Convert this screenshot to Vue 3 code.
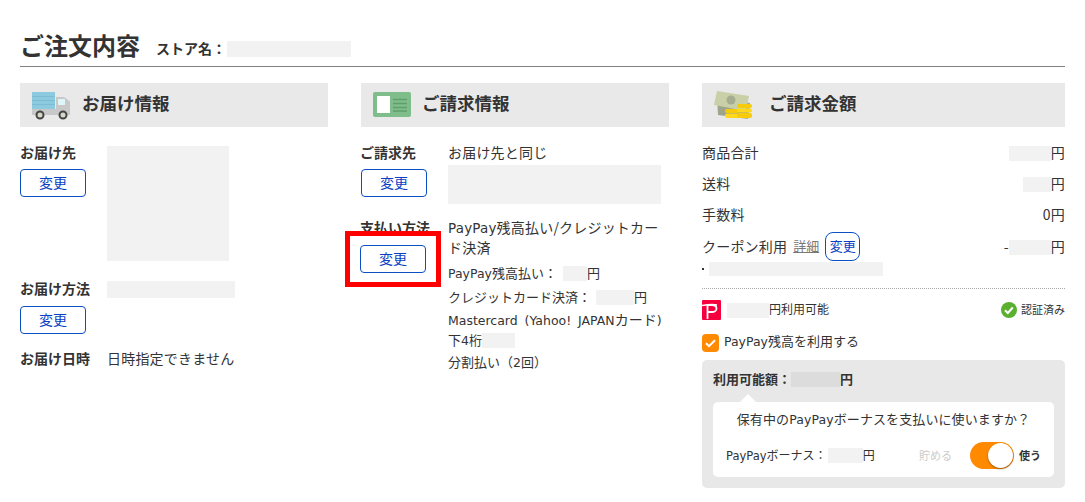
<script setup>
const totals = [
  { label: '商品合計', width: 42, value: '円' },
  { label: '送料', width: 28, value: '円' },
  { label: '手数料', width: 0, value: '0円' }
]
</script>

<template>
  <main class="page">
    <header class="title-bar">
      <h1>ご注文内容</h1>
      <span class="store">ストア名：</span>
      <i class="mask store-mask"></i>
    </header>

    <div class="columns">
      <section class="col">
        <h2 class="head head-ship">
          <svg class="ico" width="40" height="32" viewBox="0 0 40 32">
            <rect x="0" y="2" width="23" height="17" fill="#8ccbdf" />
            <path d="M0 6.500h23M0 10.500h23M0 14.500h23" stroke="#7dbcd2" stroke-width="1" />
            <path d="M0 19h24v-12h8l6 4.500v13.500h-38z" fill="#c8c8c8" />
            <rect x="26" y="9" width="7" height="6" fill="#dff6f8" />
            <circle cx="8" cy="25" r="3.500" fill="#d8d8c8" stroke="#444" stroke-width="2" />
            <circle cx="31" cy="25" r="3.500" fill="#d8d8c8" stroke="#444" stroke-width="2" />
          </svg>
          <span class="head-text">お届け情報</span>
        </h2>
        <div class="body">
          <div class="row">
            <div class="side">
              <div class="label">お届け先</div>
              <button class="change">変更</button>
            </div>
            <i class="mask addr-mask"></i>
          </div>
          <div class="row row-method">
            <div class="side">
              <div class="label">お届け方法</div>
              <button class="change">変更</button>
            </div>
            <i class="mask method-mask"></i>
          </div>
          <div class="row row-date">
            <div class="side"><div class="label">お届け日時</div></div>
            <div class="line">日時指定できません</div>
          </div>
        </div>
      </section>

      <section class="col">
        <h2 class="head head-bill">
          <svg class="ico" width="38" height="25" viewBox="0 0 38 25">
            <rect width="38" height="25" rx="2" fill="#7fbd8b" />
            <rect x="4" y="4" width="13" height="17" fill="#fff" />
            <path d="M20 7.500h14M20 11.500h14M20 15.500h14M20 19h14" stroke="#5f9f6c" stroke-width="1.500" />
          </svg>
          <span class="head-text">ご請求情報</span>
        </h2>
        <div class="body">
          <div class="row">
            <div class="side side-bill">
              <div class="label">ご請求先</div>
              <button class="change">変更</button>
            </div>
            <div class="value">
              <div class="line">お届け先と同じ</div>
              <i class="mask bill-mask"></i>
            </div>
          </div>
          <div class="row row-pay">
            <div class="side side-bill">
              <div class="label">支払い方法</div>
              <div class="highlight-wrap">
                <button class="change">変更</button>
                <span class="highlight"></span>
              </div>
            </div>
            <div class="value">
              <div class="line"><span class="la">PayPay</span>残高払い/クレジットカード決済</div>
              <div class="line small s1"><span class="la">PayPay</span>残高払い： <i class="mask m-inline m-24"></i>円</div>
              <div class="line small s2">クレジットカード決済： <i class="mask m-inline m-38"></i>円</div>
              <div class="line small s3"><span class="la">Mastercard (Yahoo! JAPAN</span><span class="kana">カード</span><span class="la">)</span><br />下<span class="la">4</span>桁<i class="mask m-inline m-33"></i></div>
              <div class="line small s4">分割払い（<span class="la">2</span>回）</div>
            </div>
          </div>
        </div>
      </section>

      <section class="col">
        <h2 class="head head-total">
          <svg class="ico" width="38" height="28" viewBox="0 0 38 28">
            <path d="M3 6l33 6-2 16-30-4z" fill="#9fa58b" />
            <path d="M3 0l32 5-3 15-32-6z" fill="#c9d0a8" />
            <circle cx="17" cy="9" r="4.500" fill="#a5ac90" />
            <g fill="#f6cb0c">
              <rect x="11" y="18" width="14" height="4" rx="2" />
              <rect x="11" y="22.500" width="14" height="4.500" rx="2" fill="#ffd91a" />
              <rect x="23" y="13" width="15" height="4" rx="2" />
              <rect x="23" y="17.500" width="15" height="4" rx="2" fill="#ffd91a" />
              <rect x="23" y="22" width="15" height="5" rx="2" />
            </g>
          </svg>
          <span class="head-text">ご請求金額</span>
        </h2>
        <div class="body">
          <div v-for="t in totals" :key="t.label" class="sum">
            <span class="txt">{{ t.label }}</span>
            <span class="amount txt">
              <i v-if="t.width" class="mask m-inline" :style="{ width: t.width + 'px' }"></i>{{ t.value }}
            </span>
          </div>
          <div class="sum coupon">
            <span class="coupon-left">
              <span class="txt">クーポン利用</span>
              <a class="detail txt">詳細</a>
              <button class="change change-tiny">変更</button>
            </span>
            <span class="amount txt">-<i class="mask m-inline m-42"></i>円</span>
          </div>
          <div class="coupon-name"><b class="dot"></b><i class="mask coupon-mask"></i></div>
          <hr class="dots" />
          <div class="pp-row">
            <span class="pp-left">
              <svg class="pp-logo" width="19" height="20" viewBox="0 0 19 20">
                <rect width="19" height="20" rx="1" fill="#f5003c" />
                <path d="M0 5.500c6-1 11-1.500 15-.5" stroke="#fff" stroke-width="1.500" fill="none" />
                <path d="M5.500 19V5h4.500c3 0 4.500 1.500 4.500 3.500S12.500 12 10 12H5.500" stroke="#fff" stroke-width="1.800" fill="none" />
              </svg>
              <i class="mask m-inline m-42"></i><span class="txt">円利用可能</span>
            </span>
            <span class="verified">
              <svg width="16" height="16" viewBox="0 0 16 16">
                <circle cx="8" cy="8" r="8" fill="#5bb030" />
                <path d="M4 8.200l2.800 2.800 5-5.500" stroke="#fff" stroke-width="2" fill="none" />
              </svg>
              <span class="txt">認証済み</span>
            </span>
          </div>
          <label class="use-row">
            <svg width="17" height="18" viewBox="0 0 17 18">
              <rect width="17" height="18" rx="4" fill="#ff8a00" />
              <path d="M4 9.200l3 3 6-6" stroke="#fff" stroke-width="2" fill="none" />
            </svg>
            <span class="use-text"><span class="la">PayPay</span>残高を利用する</span>
          </label>
          <div class="panel">
            <div class="avail"><b>利用可能額：</b><i class="mask m-inline m-panel"></i><b>円</b></div>
            <div class="card">
              <p class="question">保有中の<span class="la">PayPay</span>ボーナスを支払いに使いますか？</p>
              <div class="bonus">
                <span class="bonus-label txt"><span class="la">PayPay</span>ボーナス：<i class="mask m-inline m-bonus"></i>円</span>
                <span class="save txt">貯める</span>
                <span class="toggle"><span class="knob"></span></span>
                <b class="use txt">使う</b>
              </div>
            </div>
          </div>
        </div>
      </section>
    </div>
  </main>
</template>

<style scoped>
.page {
  width: 1045px;
  height: 502px;
  box-sizing: border-box;
  margin-left: 20px;
  padding-top: 28px;
  overflow: hidden;
  font-family: "Noto Sans CJK JP", "Noto Sans", sans-serif;
  font-size: 14px;
  line-height: 20px;
  color: #333;
}
.la {
  font-family: "DejaVu Sans", sans-serif;
  font-size: .96em;
  line-height: 1;
}
.title-bar {
  display: flex;
  align-items: center;
  height: 39px;
  box-sizing: border-box;
  padding-bottom: 5px;
  border-bottom: 1px solid #808080;
}
h1 {
  margin: 0 16px 0 0;
  font-size: 24px;
  line-height: 36px;
  font-weight: 700;
}
.store {
  margin-top: 6px;
  font-size: 14px;
  font-weight: 700;
}
.mask {
  display: block;
  background: #f2f2f2;
}
.m-inline {
  display: inline-block;
  vertical-align: -3px;
  height: 15px;
}
.store-mask {
  width: 124px;
  height: 16px;
  margin-top: 9px;
  margin-left: 1px;
}
.columns {
  display: grid;
  grid-template-columns: 308px 308px 363px;
  column-gap: 33px;
  margin-top: 16px;
}
.head {
  display: flex;
  align-items: center;
  height: 44px;
  margin: 0;
  background: #e9e9e9;
  font-size: 17.500px;
  font-weight: 700;
}
.head-text {
  margin: 0 0 5px -1px;
}
.head-ship {
  padding-left: 12px;
}
.head-ship .ico {
  margin: 2px 11px 0 0;
}
.head-bill {
  padding-left: 12px;
}
.head-bill .ico {
  margin: 0 12px 1px 0;
}
.head-total {
  padding-left: 12px;
}
.head-total .ico {
  margin: 0 18px 0 0;
}
.body {
  padding-top: 16px;
}
.row {
  display: flex;
  align-items: flex-start;
}
.side {
  width: 87px;
  flex: none;
}
.label {
  padding-bottom: 2px;
  line-height: 18px;
  font-weight: 700;
  white-space: nowrap;
}
.line {
  letter-spacing: .2px;
  line-height: 20px;
  position: relative;
  top: -1px;
}
.change {
  display: block;
  width: 66px;
  height: 28px;
  margin-top: 6px;
  padding: 0 0 2px;
  box-sizing: border-box;
  border: 1px solid #0a4fc4;
  border-radius: 4px;
  background: #fff;
  color: #0a3fc4;
  font: 14px/1 "Noto Sans CJK JP", sans-serif;
}
.addr-mask {
  width: 122px;
  height: 115px;
  margin-top: 3px;
}
.row-method {
  margin-top: 18px;
}
.row-method .change {
  margin-top: 7px;
}
.method-mask {
  width: 128px;
  height: 17px;
  margin-top: 2px;
}
.row-date {
  margin-top: 15px;
}
.side-bill .label {
  margin-left: -1px;
}
.value {
  width: 216px;
}
.bill-mask {
  width: 213px;
  height: 39px;
  margin-top: 2px;
}
.row-pay {
  margin-top: 14px;
}
.highlight-wrap {
  position: relative;
  margin-top: 7px;
  margin-left: -1px;
}
.highlight-wrap .change {
  margin-top: 0;
}
.highlight {
  position: absolute;
  left: -15px;
  top: -14px;
  width: 96px;
  height: 56px;
  box-sizing: border-box;
  border: 5px solid #f00;
  pointer-events: none;
}
.small {
  font-size: 13px;
  letter-spacing: 0;
}
.s1 { margin-top: 6px; }
.s2 { margin-top: 4px; }
.s3 { margin-top: 3px; white-space: nowrap; word-spacing: 3px; }
.s4 { margin-top: 2px; }
.kana { font-size: 14px; line-height: 1; }
.m-24 { width: 24px; margin-left: 3px; }
.m-38 { width: 38px; margin-left: 2px; }
.m-33 { width: 33px; }
.m-42 { width: 42px; }
.txt {
  padding-bottom: 2px;
}
.sum {
  display: flex;
  justify-content: space-between;
  align-items: center;
  height: 20px;
  margin-bottom: 11px;
  letter-spacing: .2px;
}
.coupon {
  height: 29px;
  margin-top: -4px;
  margin-bottom: 1px;
}
.coupon-left {
  display: flex;
  align-items: center;
}
.detail {
  margin-left: 6px;
  font-size: 13px;
  color: #777;
  letter-spacing: 0;
  text-decoration: underline;
}
.change-tiny {
  width: 35px;
  height: 29px;
  margin: 0 0 0 6px;
  border-radius: 8px;
  font-size: 13px;
}
.coupon-name {
  display: flex;
  align-items: center;
}
.dot {
  width: 2px;
  height: 2px;
  margin-right: 5px;
  background: #333;
}
.coupon-mask {
  width: 174px;
  height: 14px;
}
.dots {
  margin: 12px 0 0;
  border: 0;
  border-top: 1px dotted #aaa;
}
.pp-row {
  display: flex;
  justify-content: space-between;
  align-items: center;
  height: 20px;
  margin-top: 11px;
  font-size: 12px;
}
.pp-left {
  display: flex;
  align-items: center;
}
.pp-logo {
  margin-right: 6px;
}
.verified {
  display: flex;
  align-items: center;
  gap: 4px;
  font-size: 11px;
}
.use-row {
  display: flex;
  align-items: center;
  gap: 5px;
  height: 18px;
  margin-top: 14px;
  font-size: 13px;
}
.use-text {
  padding-bottom: 4px;
}
.panel {
  height: 128px;
  box-sizing: border-box;
  margin-top: 8px;
  padding: 9px 11px;
  border-radius: 5px;
  background: #e8e8e8;
}
.avail {
  font-size: 13px;
}
.avail .mask {
  width: 49px;
  background: #dcdcdc;
}
.card {
  position: relative;
  height: 75px;
  margin-top: 13px;
  box-sizing: border-box;
  padding-top: 7px;
  border-radius: 5px;
  background: #fff;
}
.card::before {
  content: "";
  position: absolute;
  left: 27px;
  top: -8px;
  border: 8px solid transparent;
  border-top: 0;
  border-bottom-color: #fff;
}
.question {
  margin: 0;
  font-size: 13px;
  letter-spacing: .1px;
  text-align: center;
}
.bonus {
  display: flex;
  align-items: center;
  margin-top: 13px;
  padding-left: 13px;
}
.bonus-label {
  width: 193px;
  font-size: 12px;
  white-space: nowrap;
}
.m-bonus {
  width: 35px;
  margin-left: 1px;
}
.save {
  width: 51px;
  font-size: 11px;
  color: #ccc;
}
.toggle {
  position: relative;
  width: 44px;
  height: 27px;
  border-radius: 14px;
  background: #ff8a00;
}
.knob {
  position: absolute;
  right: 1px;
  top: 1px;
  width: 25px;
  height: 25px;
  border-radius: 50%;
  background: #fff;
  box-shadow: 0 1px 2px rgba(0, 0, 0, .4);
}
.use {
  margin-left: 5px;
  font-size: 11px;
}
</style>

<style>
html, body { background: #fff; }
</style>
